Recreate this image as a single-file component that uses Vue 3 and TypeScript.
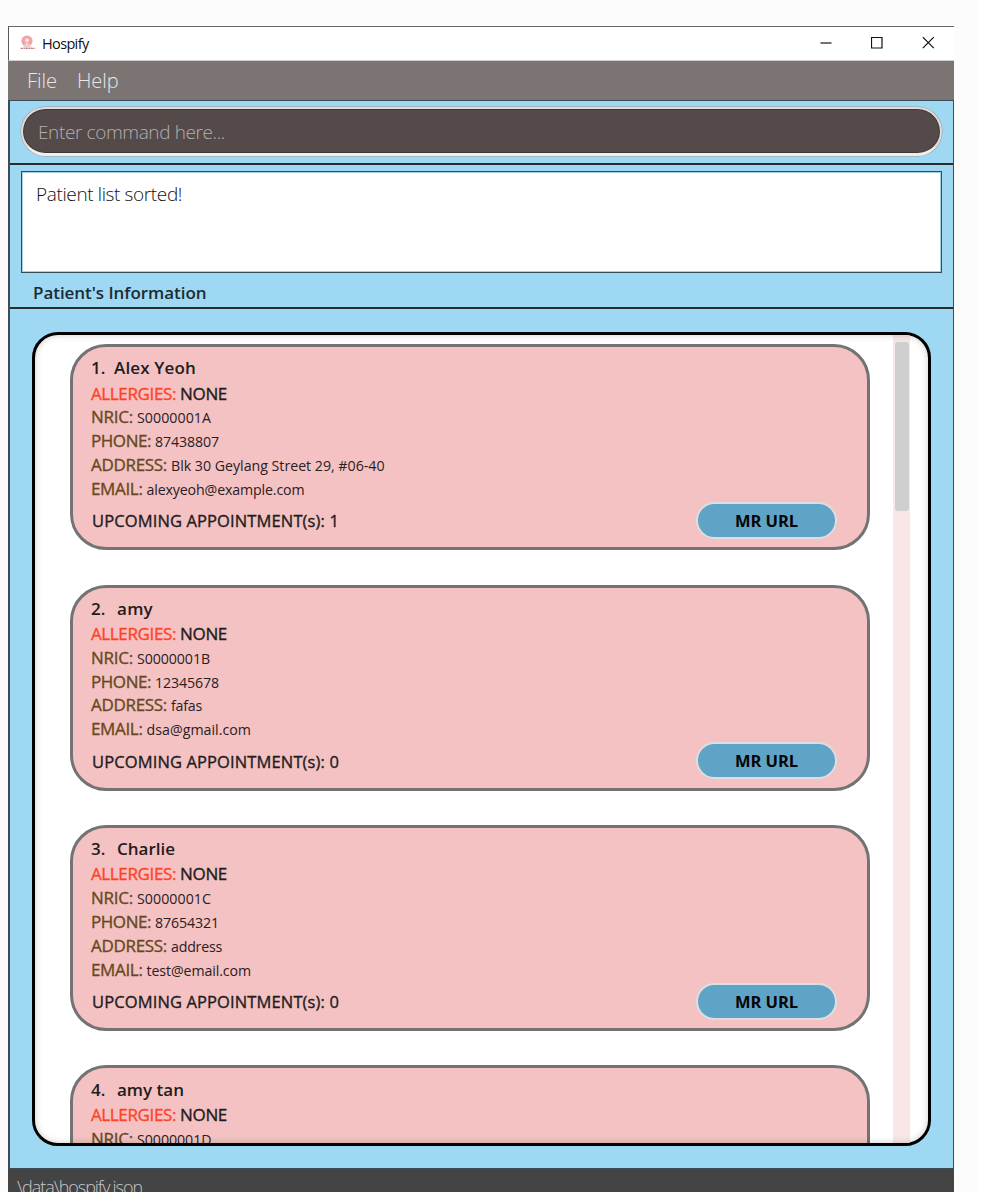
<script setup lang="ts">
interface Field {
  label: string
  labelWidth: number
  value: string
  width: number
}

interface Patient {
  id: number
  name: string
  nameWidth: number
  appointments: number
  fields: Field[]
}

function patient(
  id: number,
  name: string,
  nameWidth: number,
  appointments: number,
  values: [string, number][],
): Patient {
  const labels: [string, number][] = [
    ['NRIC:', 42],
    ['PHONE:', 60],
    ['ADDRESS:', 76],
    ['EMAIL:', 51.5],
  ]
  return {
    id,
    name,
    nameWidth,
    appointments,
    fields: values.map(([value, width], i) => ({
      label: labels[i][0],
      labelWidth: labels[i][1],
      value,
      width,
    })),
  }
}

const patients: Patient[] = [
  patient(1, 'Alex Yeoh', 82, 1, [
    ['S0000001A', 74],
    ['87438807', 64],
    ['Blk 30 Geylang Street 29, #06-40', 213.5],
    ['alexyeoh@example.com', 158],
  ]),
  patient(2, 'amy', 36, 0, [
    ['S0000001B', 73],
    ['12345678', 64],
    ['fafas', 31],
    ['dsa@gmail.com', 104.5],
  ]),
  patient(3, 'Charlie', 58, 0, [
    ['S0000001C', 74],
    ['87654321', 64],
    ['address', 51],
    ['test@email.com', 104.5],
  ]),
  patient(4, 'amy tan', 67, 0, [
    ['S0000001D', 74.5],
    ['87438807', 64],
    ['address', 51],
    ['amytan@email.com', 124],
  ]),
]

// Tracks a label so that it takes up the given width in pixels.
const vFit = {
  mounted(el: HTMLElement, binding: { value: number }) {
    const count = (el.textContent ?? '').length
    const natural = el.getBoundingClientRect().width
    const spacing = (binding.value - natural) / count
    el.style.letterSpacing = `${spacing.toFixed(3)}px`
  },
}
</script>

<template>
  <div class="page">
    <div class="window">
      <header class="titlebar">
        <svg class="logo" width="16" height="16" viewBox="0 0 16 16">
          <circle cx="7" cy="6" r="5.6" fill="#f0a3a3" />
          <circle cx="7" cy="5.2" r="2" fill="#fbe6e6" />
          <path d="M4.6 11V8.8q2.4-2 4.8 0V11z" fill="#fbe6e6" />
          <path d="M5.8 8.2v2.4M8.2 8.2v2.4" stroke="#e98b8b" stroke-width=".8" />
          <path d="M.6 13.4h14.8" stroke="#b98a8f" stroke-width="1.4" stroke-dasharray="2.6 .5 1.4 .4" />
          <path d="M3.4 12h8" stroke="#dcb6b8" stroke-width="1" />
        </svg>
        <span v-fit="46.5" class="app-name">Hospify</span>
        <div class="controls">
          <svg width="13" height="13" viewBox="0 0 13 13"><path d="M.5 7h11" /></svg>
          <svg width="13" height="13" viewBox="0 0 13 13"><path d="M.5 1.5h10.5v10.5H.5z" /></svg>
          <svg width="13" height="13" viewBox="0 0 13 13"><path d="M.8 1.2l11 11M11.8 1.2l-11 11" /></svg>
        </div>
      </header>

      <nav class="menu">
        <span v-fit="30">File</span>
        <span v-fit="41.5">Help</span>
      </nav>

      <div class="body">
        <section class="command">
          <div class="command-box"><span v-fit="187">Enter command here...</span></div>
        </section>

        <section class="result">
          <div class="result-box"><span v-fit="146">Patient list sorted!</span></div>
          <h1 class="heading"><span v-fit="173.5">Patient's Information</span></h1>
        </section>

        <main class="content">
          <div class="panel">
            <div class="cards">
              <article v-for="p in patients" :key="p.id" class="card">
                <div class="name">
                  <span class="index" :class="{ narrow: p.id === 1 }">{{ p.id }}.</span>
                  <span v-fit="p.nameWidth">{{ p.name }}</span>
                </div>
                <div class="row">
                  <span v-fit="85" class="label allergy">ALLERGIES:</span>
                  <span v-fit="47" class="label none">NONE</span>
                </div>
                <div v-for="f in p.fields" :key="f.label" class="row">
                  <span v-fit="f.labelWidth" class="label">{{ f.label }}</span>
                  <span v-fit="f.width" class="value">{{ f.value }}</span>
                </div>
                <footer class="foot">
                  <span v-fit="248" class="upcoming">UPCOMING APPOINTMENT(s): {{ p.appointments }}</span>
                  <button class="url"><span v-fit="63">MR URL</span></button>
                </footer>
              </article>
            </div>
            <div class="track"><div class="thumb"></div></div>
          </div>
        </main>
      </div>

      <footer class="status"><span v-fit="125">\data\hospify.json</span></footer>
    </div>
  </div>
</template>

<style>
body {
  margin: 0;
  overflow: hidden;
  background: #fff;
}
</style>

<style scoped>
.page {
  box-sizing: border-box;
  width: 977px;
  height: 1192px;
  padding: 26px 23px 0 8px;
  overflow: hidden;
  background: #fcfcfc;
  font-family: 'Open Sans', 'Noto Sans', sans-serif;
}
.page span {
  display: inline-block;
  white-space: pre;
}
.window {
  display: flex;
  flex-direction: column;
  width: 946px;
  height: 1166px;
  overflow: hidden;
}
.titlebar {
  box-sizing: border-box;
  display: flex;
  flex: none;
  align-items: center;
  height: 35px;
  padding: 0 19px 0 11px;
  border-top: 1px solid #666;
  border-bottom: 1px solid #d2cfcf;
  border-left: 1px solid #555;
  background: #fff;
}
.logo {
  margin-right: 6px;
  margin-bottom: 1px;
}
.app-name {
  color: #111;
  font-size: 14.5px;
  line-height: 33px;
}
.controls {
  display: flex;
  gap: 38px;
  margin-left: auto;
  margin-bottom: 2px;
}
.controls svg {
  fill: none;
  stroke: #111;
  stroke-width: 1.2;
}
.menu {
  display: flex;
  flex: none;
  gap: 20px;
  box-sizing: border-box;
  height: 39px;
  padding-left: 19px;
  background: #7b7473;
  color: #e9e7e7;
  font-size: 20px;
  font-weight: 300;
  line-height: 40px;
}
.body {
  display: flex;
  flex: none;
  flex-direction: column;
  box-sizing: border-box;
  height: 1069px;
  border: solid #3b4d57;
  border-width: 1px 1px 1px 2px;
  background: #9fd8f3;
}
.command {
  box-sizing: border-box;
  flex: none;
  height: 64px;
  padding: 6px 11px 0 11px;
  border-bottom: 2px solid #2a2c2e;
}
.command-box {
  box-sizing: border-box;
  height: 49px;
  padding-left: 15px;
  border: 2px solid #e3dbda;
  border-bottom: 3px solid #f2eceb;
  border-radius: 25px;
  background: #534a49;
  box-shadow: inset 0 0 0 1px #3b3a3a, 0 0 0 0.5px #999;
  color: #b3afad;
  font-size: 19px;
  font-weight: 300;
  line-height: 46px;
}
.result {
  box-sizing: border-box;
  flex: none;
  height: 144px;
  padding: 6px 11px 0 11px;
  border-bottom: 2px solid #2a2c2e;
}
.result-box {
  box-sizing: border-box;
  height: 102px;
  padding: 8px 0 0 14px;
  border: 1px solid #344c58;
  background: #fff;
  box-shadow: inset 0 0 0 1px #a9cfdd;
  color: #111;
  font-size: 19px;
  font-weight: 300;
  line-height: 28px;
}
.heading {
  margin: 0;
  padding-left: 12px;
  color: #1d2b31;
  font-size: 17px;
  font-weight: 600;
  line-height: 39px;
}
.content {
  flex: 1;
  padding: 23px 22px 0 22px;
}
.panel {
  display: flex;
  position: relative;
  box-sizing: border-box;
  height: 814px;
  overflow: hidden;
  border: 3px solid #000;
  border-radius: 26px;
  background: #fff;
}
.panel::after {
  position: absolute;
  inset: 0;
  border-radius: 23px;
  box-shadow: inset 0 0 7px rgba(0, 0, 0, 0.2);
  content: '';
  pointer-events: none;
}
.cards {
  display: flex;
  flex-direction: column;
  gap: 34.4px;
  width: 800px;
  padding: 9.3px 23px 0 35px;
}
.card {
  box-sizing: border-box;
  flex: none;
  height: 206px;
  padding: 6.2px 30px 0 18px;
  border: 3.5px solid #737373;
  border-radius: 36px;
  background: #f4c2c3;
}
.name {
  display: flex;
  height: 27.2px;
  color: #221c1c;
  font-size: 17px;
  font-weight: 600;
  line-height: 29px;
}
.index {
  width: 26px;
}
.index.narrow {
  width: 23px;
}
.row {
  display: flex;
  gap: 4px;
  align-items: baseline;
  height: 23.8px;
}
.label {
  color: #68481f;
  font-size: 17px;
  line-height: 25px;
  -webkit-text-stroke: 0.35px currentColor;
}
.allergy {
  color: #ff4329;
}
.none {
  color: #221c1c;
}
.value {
  color: #2a2021;
  font-size: 14.2px;
  line-height: 1;
}
.foot {
  display: flex;
  align-items: center;
  justify-content: space-between;
  height: 38px;
  margin-top: 1.8px;
}
.upcoming {
  padding-left: 1px;
  color: #221c1c;
  font-size: 16.5px;
  line-height: 38px;
  padding-top: 2px;
  -webkit-text-stroke: 0.35px currentColor;
}
.url {
  box-sizing: border-box;
  width: 141px;
  height: 37px;
  padding: 0;
  border: 2px solid #dcdfe1;
  border-radius: 19px;
  background: #5fa4c6;
  color: #050505;
  font-family: inherit;
  font-size: 16.5px;
  font-weight: 700;
  line-height: 33px;
}
.track {
  box-sizing: border-box;
  width: 17px;
  padding: 7px 1px 0 2px;
  background: #f9e6e7;
}
.thumb {
  height: 169px;
  border-radius: 3px;
  background: #cfcfcf;
}
.status {
  flex: none;
  height: 40px;
  padding-left: 9px;
  background: #444;
  color: #c9c9c9;
  font-size: 18px;
  font-weight: 300;
  line-height: 36px;
}
</style>
